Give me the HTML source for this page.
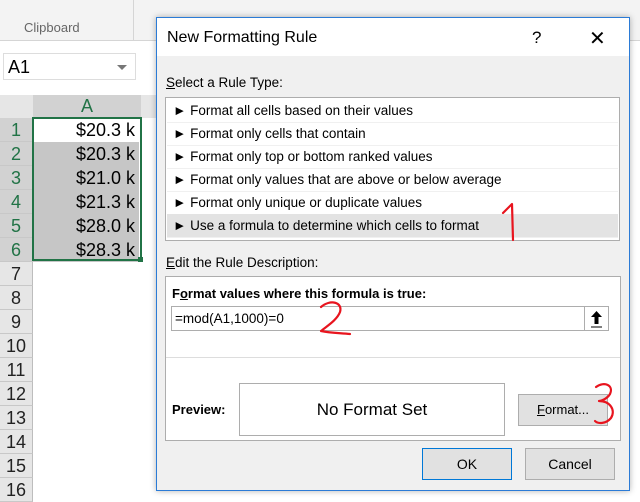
<!DOCTYPE html><html><head><style>
body{margin:0;width:640px;height:498px;overflow:hidden;background:#fff;font-family:"Liberation Sans",sans-serif;position:relative}
.a{position:absolute}
.rh{position:absolute;left:0;width:32px;height:23px;background:#e6e6e6;border-bottom:1px solid #c8c8c8;border-right:1px solid #bdbdbd;text-align:center;font-size:18px;line-height:24px;color:#222}
.rh.s{color:#217346;background:#d2d2d2}
.c{position:absolute;left:33px;width:102px;height:24px;text-align:right;font-size:18px;line-height:24px;background:#c6c6c6;padding-right:4px}
.li{position:absolute;left:1px;right:1px;height:23px;font-size:13.5px;line-height:23px;padding-left:6px;border-bottom:1px solid #f0f0f0}
.btn{position:absolute;background:#e1e1e1;border:1px solid #adadad;font-size:14px;text-align:center;box-sizing:border-box}
</style></head><body>
<div class="a" style="left:0;top:0;width:640px;height:40px;background:#f3f3f3;border-bottom:1px solid #d5d5d5"></div>
<div class="a" style="left:24px;top:20px;font-size:13px;color:#666">Clipboard</div>
<div class="a" style="left:133px;top:0;width:1px;height:40px;background:#d5d5d5"></div>
<div class="a" style="left:0;top:41px;width:640px;height:54px;background:#fff"></div>
<div class="a" style="left:3px;top:53px;width:133px;height:27px;background:#fff;border:1px solid #ddd;font-size:18px;line-height:27px;padding-left:4px;box-sizing:border-box">A1<span style="position:absolute;right:8px;top:11px;border:5px solid transparent;border-top-color:#777"></span></div>
<div class="a" style="left:0;top:95px;width:33px;height:23px;background:#e6e6e6"></div>
<div class="a" style="left:33px;top:95px;width:108px;height:22px;background:#d2d2d2;border-bottom:1px solid #217346;text-align:center;color:#217346;font-size:18px;line-height:23px">A</div>
<div class="a" style="left:141px;top:95px;width:20px;height:23px;background:#e6e6e6"></div>
<div class="rh s" style="top:118px">1</div><div class="rh s" style="top:142px">2</div><div class="rh s" style="top:166px">3</div><div class="rh s" style="top:190px">4</div><div class="rh s" style="top:214px">5</div><div class="rh s" style="top:238px">6</div>
<div class="rh" style="top:262px">7</div><div class="rh" style="top:286px">8</div><div class="rh" style="top:310px">9</div><div class="rh" style="top:334px">10</div><div class="rh" style="top:358px">11</div><div class="rh" style="top:382px">12</div><div class="rh" style="top:406px">13</div><div class="rh" style="top:430px">14</div><div class="rh" style="top:454px">15</div><div class="rh" style="top:478px">16</div>
<div class="c" style="top:118px;background:#fff">$20.3 k</div><div class="c" style="top:142px">$20.3 k</div><div class="c" style="top:166px">$21.0 k</div><div class="c" style="top:190px">$21.3 k</div><div class="c" style="top:214px">$28.0 k</div><div class="c" style="top:238px">$28.3 k</div>
<div class="a" style="left:32px;top:117px;width:110px;height:144px;border:2px solid #217346;box-sizing:border-box"></div>
<div class="a" style="left:138px;top:257px;width:5px;height:5px;background:#217346"></div>

<div class="a" style="left:156px;top:17px;width:472px;height:472px;border:1px solid #2b7bd6;background:#f0f0f0;box-shadow:0 0 6px rgba(0,0,0,.3)">
<div class="a" style="left:0;top:0;width:472px;height:38px;background:#fff"></div>
<div class="a" style="left:10px;top:11px;font-size:16px">New Formatting Rule</div>
<div class="a" style="left:375px;top:10px;font-size:17px">?</div>
<div class="a" style="left:432px;top:8px;font-size:20px;font-weight:300">✕</div>
<div class="a" style="left:9px;top:57px;font-size:13.5px"><u>S</u>elect a Rule Type:</div>
<div class="a" style="left:8px;top:79px;width:455px;height:144px;background:#fff;border:1px solid #adadad;box-sizing:border-box">
<div class="li" style="top:1px">► Format all cells based on their values</div>
<div class="li" style="top:24px">► Format only cells that contain</div>
<div class="li" style="top:47px">► Format only top or bottom ranked values</div>
<div class="li" style="top:70px">► Format only values that are above or below average</div>
<div class="li" style="top:93px">► Format only unique or duplicate values</div>
<div class="li" style="top:116px;background:#e3e3e3">► Use a formula to determine which cells to format</div>
</div>
<div class="a" style="left:9px;top:237px;font-size:13.5px"><u>E</u>dit the Rule Description:</div>
<div class="a" style="left:8px;top:258px;width:456px;height:165px;background:#fff;border:1px solid #adadad;box-sizing:border-box"></div>
<div class="a" style="left:15px;top:268px;font-size:13px;font-weight:bold">F<u>o</u>rmat values where this formula is true:</div>
<div class="a" style="left:14px;top:288px;width:438px;height:25px;border:1px solid #adadad;box-sizing:border-box;font-size:13.5px;line-height:23px;padding-left:3px">=mod(A1,1000)=0
<div class="a" style="right:0;top:0;width:23px;height:23px;border-left:1px solid #adadad"><svg width="23" height="23"><path d="M11.5 4 L6 10 H9.5 V17 H13.5 V10 H17 Z" fill="#000"/><path d="M6 20 H17" stroke="#000" stroke-width="1"/></svg></div></div>
<div class="a" style="left:9px;top:339px;width:454px;height:1px;background:#ddd"></div>
<div class="a" style="left:15px;top:384px;font-size:13px;font-weight:bold">Preview:</div>
<div class="a" style="left:82px;top:365px;width:266px;height:53px;border:1px solid #adadad;box-sizing:border-box;font-size:17px;text-align:center;line-height:51px">No Format Set</div>
<div class="btn" style="left:361px;top:376px;width:90px;height:32px;line-height:30px;font-size:13px"><u>F</u>ormat...</div>
<div class="btn" style="left:265px;top:430px;width:90px;height:32px;line-height:30px;border:1px solid #0078d7">OK</div>
<div class="btn" style="left:368px;top:430px;width:90px;height:32px;line-height:30px">Cancel</div>
</div>
<svg class="a" style="left:0;top:0" width="640" height="498"><g fill="none" stroke="#e8141e" stroke-width="2.2" stroke-linecap="round" stroke-linejoin="round">
<path d="M503 213 L512 204 L513 240"/>
<path d="M321 307 C330 299 343 302 340 312 C337 320 327 326 321 331 C330 333 340 333 350 334"/>
<path d="M596 387 C604 381 614 385 610 394 C607 399 601 401 599 401 C610 401 616 410 611 418 C606 424 598 424 595 421"/>
</g></svg>
</body></html>
